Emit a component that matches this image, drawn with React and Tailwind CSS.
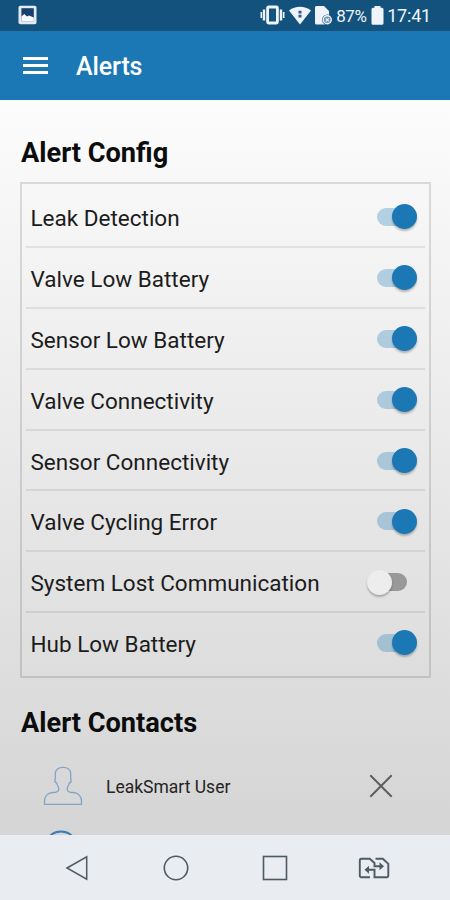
import React, { useState } from 'react';
import clsx from 'clsx';

const initialAlerts = [
  { id: 'leak', label: 'Leak Detection', enabled: true },
  { id: 'valve-battery', label: 'Valve Low Battery', enabled: true },
  { id: 'sensor-battery', label: 'Sensor Low Battery', enabled: true },
  { id: 'valve-connectivity', label: 'Valve Connectivity', enabled: true },
  { id: 'sensor-connectivity', label: 'Sensor Connectivity', enabled: true },
  { id: 'valve-cycling', label: 'Valve Cycling Error', enabled: true },
  { id: 'lost-communication', label: 'System Lost Communication', enabled: false },
  { id: 'hub-battery', label: 'Hub Low Battery', enabled: true },
];

const StatusBar = () => (
  <div className="flex h-[30.5px] shrink-0 items-center bg-[#13527c] pl-[18px] pr-[19px] text-[#eef4f9]">
    {/* Screenshot notification */}
    <svg width="19" height="20" viewBox="0 0 19 20">
      <rect x="0.5" y="0.8" width="18" height="18.4" rx="1.8" fill="#e4eaf3" />
      <rect x="3.4" y="3.2" width="12.4" height="13" fill="#173f70" />
      <path d="M3.4 11.5 6.3 9l2.7 2.5 2-1 4.8 2v3.7H3.4z" fill="#f6f8fb" />
    </svg>

    <div className="ml-auto flex items-center">
      {/* Vibrate */}
      <svg width="25" height="20" viewBox="0 0 25 20" fill="none" stroke="currentColor" strokeWidth="2">
        <rect x="7.6" y="2" width="9.8" height="16" rx="1" strokeWidth="2.8" />
        <path d="M4 4.5v11M21 4.5v11" strokeWidth="2.4" />
        <path d="M1.3 7v6M23.7 7v6" strokeWidth="1.6" />
      </svg>
      {/* Wi-Fi */}
      <svg className="ml-1" width="22" height="19" viewBox="0 0 22 19">
        <path d="M0 4.4C6.5-.6 15.5-.6 22 4.4L11 18.5z" fill="currentColor" />
        <path d="M11 4.8v2.6M11 8.8v2.6" stroke="#32558c" strokeWidth="3" />
      </svg>
      {/* SIM card */}
      <svg className="ml-1" width="18" height="19" viewBox="0 0 18 19">
        <path d="M1.5 0H9l5 5v13.5H1.5A1.5 1.5 0 0 1 0 17V1.5A1.5 1.5 0 0 1 1.5 0z" fill="currentColor" />
        <circle cx="12.3" cy="13.8" r="5.2" fill="#13527c" />
        <circle cx="12.3" cy="13.8" r="4" fill="#6f91b4" stroke="currentColor" strokeWidth="1.4" />
        <path d="m10.8 12.3 3 3m0-3-3 3" stroke="currentColor" strokeWidth="1.2" />
      </svg>
      <span className="ml-[3px] w-[35px] whitespace-nowrap pt-0.5 text-[17px] leading-5 tracking-[-0.4px]">87%</span>
      {/* Battery */}
      <svg className="mr-[3px]" width="13" height="19" viewBox="0 0 13 19">
        <path d="M3.5 0h6v1.8H11a1.5 1.5 0 0 1 1.5 1.5v14a1.5 1.5 0 0 1-1.5 1.5H2A1.5 1.5 0 0 1 .5 17.3v-14A1.5 1.5 0 0 1 2 1.8h1.5z" fill="currentColor" />
      </svg>
      <span className="pt-0.5 text-[18px] leading-5 tracking-[-0.2px]">17:41</span>
    </div>
  </div>
);

const Header = () => (
  <header className="flex h-[69.5px] shrink-0 items-center bg-[#1c78b5] pl-[23px]">
    <button aria-label="Menu" className="flex w-[25px] flex-col gap-[4px]">
      <span className="h-[3px] bg-white" />
      <span className="h-[3px] bg-white" />
      <span className="h-[3px] bg-white" />
    </button>
    <h1 className="ml-[28px] pt-1 text-[25px] leading-8 font-medium tracking-[-0.1px] text-white">Alerts</h1>
  </header>
);

const Toggle = ({ on, onClick }) => (
  <button
    role="switch"
    aria-checked={on}
    onClick={onClick}
    className="mr-[7.5px] mt-px flex h-[26px] w-[52px] items-center justify-center"
  >
    <span
      className={clsx(
        'flex h-[18px] w-[30px] items-center rounded-full',
        on ? 'justify-end bg-[#1c78b5]/30' : 'justify-start bg-[#999999]'
      )}
    >
      <span
        className={clsx(
          'size-[25px] shrink-0 rounded-full shadow-[0_2px_2px_rgba(0,0,0,0.25)]',
          on ? '-mr-[10px] bg-[#1c78b5]' : '-ml-[10px] bg-[#ededed]'
        )}
      />
    </span>
  </button>
);

const Contact = ({ name }) => (
  <div className="flex h-[60px] items-center pl-[43px] pr-[57px]">
    <svg width="40" height="40" viewBox="0 0 40 40" fill="none" stroke="#7fa5cb" strokeWidth="1.3">
      <path d="M1.5 38.3v-3c0-5.3 3.6-8.8 8.500-8.800 3 0 5.800-.6 5.800-3.500 0-2.300-1.600-3.200-2.100-6-1.300-.2-2-1.700-1.800-3 .1-.8.4-1.100.4-1.800V7.500C12.300 3.500 15.500 1.300 20 1.300s7.700 2.200 7.700 6.200v4.700c0 .7.300 1 .4 1.800.2 1.300-.5 2.800-1.800 3-.5 2.800-2.100 3.700-2.100 6 0 2.900 2.800 3.500 5.800 3.500 4.900 0 8.500 3.500 8.500 8.800v3z" />
    </svg>
    <span className="ml-[23px] pt-px text-[17.5px] leading-6 text-[#242424]">{name}</span>
    <button aria-label="Remove contact" className="ml-auto">
      <svg width="24" height="24" viewBox="0 0 24 24" stroke="#5e5e5e" strokeWidth="2">
        <path d="m1.3 1.3 21.4 21.4m0-21.4L1.3 22.7" />
      </svg>
    </button>
  </div>
);

const NavigationBar = () => (
  <nav className="flex h-[65px] shrink-0 items-center bg-[#e9ecf0] pl-[65px] text-[#4d5b65]">
    <svg width="24" height="26" viewBox="0 0 24 26" fill="none" stroke="currentColor" strokeWidth="1.5">
      <path d="M2 13 21.7 1.8v22.4z" />
    </svg>
    <svg className="ml-[74px]" width="26" height="26" viewBox="0 0 26 26" fill="none" stroke="currentColor" strokeWidth="1.6">
      <circle cx="13" cy="13" r="11.7" />
    </svg>
    <svg className="ml-[73px]" width="26" height="26" viewBox="0 0 26 26" fill="none" stroke="currentColor" strokeWidth="1.6">
      <rect x="1.5" y="1.5" width="23" height="23" />
    </svg>
    {/* SIM switch */}
    <svg className="ml-[70px]" width="32" height="22" viewBox="0 0 32 22" fill="none" stroke="currentColor" strokeWidth="1.9">
      <path d="M12 20.2H3.3a1.5 1.5 0 0 1-1.5-1.5V3.3a1.5 1.5 0 0 1 1.5-1.500h8.400l4.800 4.200v3.200H23" />
      <path d="M17.5 1.8h7.3l5.5 5v11.900a1.500 1.500 0 0 1-1.500 1.500H16.500v-7.400H9" />
      <path d="m21.500 5.200 4.500 4-4.500 4zM11 8.800l-4.500 4 4.500 4z" fill="currentColor" stroke="none" />
    </svg>
  </nav>
);

const App = () => {
  const [alerts, setAlerts] = useState(initialAlerts);

  const toggleAlert = (id) => {
    setAlerts(alerts.map((alert) => (alert.id === id ? { ...alert, enabled: !alert.enabled } : alert)));
  };

  return (
    <div className="flex h-[900px] w-[450px] flex-col overflow-hidden font-[Roboto,sans-serif]">
      <StatusBar />
      <Header />

      <main className="min-h-0 flex-1 overflow-hidden bg-linear-to-b from-[#fcfcfc] to-[#d5d5d5] pt-[37px]">
        <h2 className="pl-[21px] text-[27.2px] leading-8 font-bold text-[#0c0c0c]">Alert Config</h2>

        <section className="ml-5 mr-[19px] mt-[13px] h-[496px] border-2 border-black/12 px-1 pt-[3px]">
          {alerts.map((alert) => (
            <div
              key={alert.id}
              className="flex h-[60.9px] items-center justify-between border-b-2 border-black/8 pl-[4.5px] last:border-b-0 last:pb-[3px]"
            >
              <span className="whitespace-nowrap pt-[3px] text-[22.5px] leading-7 text-[#1c1c1c]">{alert.label}</span>
              <Toggle on={alert.enabled} onClick={() => toggleAlert(alert.id)} />
            </div>
          ))}
        </section>

        <h2 className="mt-[29px] pl-[21px] text-[27.2px] leading-8 font-bold text-[#0c0c0c]">Alert Contacts</h2>

        <div className="mt-[17px]">
          <Contact name="LeakSmart User" />
          <svg className="ml-[43px] mt-[14px]" width="36" height="36" viewBox="0 0 36 36" fill="none" stroke="#3c7db5" strokeWidth="1.8">
            <circle cx="18" cy="18" r="16.5" />
            <path d="M18 10v16M10 18h16" />
          </svg>
        </div>
      </main>

      <NavigationBar />
    </div>
  );
};

export default App;
